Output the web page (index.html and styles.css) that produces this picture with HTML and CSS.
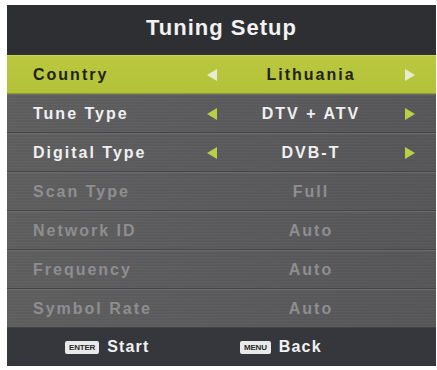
FILE: index.html
```html
<!DOCTYPE html>
<html>
<head>
<meta charset="utf-8">
<link rel="stylesheet" href="styles.css">
</head>
<body>
<div class="panel">
  <div class="header">Tuning Setup</div>
  <div class="row active">
    <span class="label">Country</span>
    <span class="arrow left"></span>
    <span class="value">Lithuania</span>
    <span class="arrow right"></span>
  </div>
  <div class="row">
    <span class="label">Tune Type</span>
    <span class="arrow left"></span>
    <span class="value">DTV + ATV</span>
    <span class="arrow right"></span>
  </div>
  <div class="row">
    <span class="label">Digital Type</span>
    <span class="arrow left"></span>
    <span class="value">DVB-T</span>
    <span class="arrow right"></span>
  </div>
  <div class="row dim">
    <span class="label">Scan Type</span>
    <span></span>
    <span class="value">Full</span>
    <span></span>
  </div>
  <div class="row dim">
    <span class="label">Network ID</span>
    <span></span>
    <span class="value">Auto</span>
    <span></span>
  </div>
  <div class="row dim">
    <span class="label">Frequency</span>
    <span></span>
    <span class="value">Auto</span>
    <span></span>
  </div>
  <div class="row dim">
    <span class="label">Symbol Rate</span>
    <span></span>
    <span class="value">Auto</span>
    <span></span>
  </div>
  <div class="footer">
    <div class="hint"><span class="key">ENTER</span><span class="hint-text">Start</span></div>
    <div class="hint"><span class="key">MENU</span><span class="hint-text">Back</span></div>
  </div>
</div>
</body>
</html>
```
FILE: styles.css
```css
html, body {
  margin: 0;
  padding: 0;
  background: #ffffff;
}
body {
  font-family: "Liberation Sans", Arial, sans-serif;
  font-weight: bold;
}
.panel {
  margin: 5px 1px 0 7px;
  width: 429px;
  display: flex;
  flex-direction: column;
}
.header {
  height: 50px;
  background: #2e2f33;
  color: #f2f2f2;
  font-size: 22px;
  letter-spacing: 1px;
  display: flex;
  align-items: center;
  justify-content: center;
  padding-bottom: 4px;
  box-sizing: border-box;
}
.row {
  height: 39px;
  box-sizing: border-box;
  display: grid;
  grid-template-columns: 173px 12px 186px 12px;
  padding-left: 26px;
  align-items: center;
  background:
    repeating-linear-gradient(180deg, rgba(255,255,255,0.025) 0px, rgba(255,255,255,0.025) 1px, rgba(0,0,0,0.03) 2px, rgba(0,0,0,0) 3px),
    linear-gradient(90deg, #5e5e5f 0%, #5a5a5c 50%, #565658 100%);
  border-top: 1px solid #6c6c6d;
  border-bottom: 1px solid #434345;
  color: #f0f0f0;
  font-size: 16px;
  letter-spacing: 2px;
}
.row.active {
  background: linear-gradient(180deg, #bac83f 0%, #b4c23a 100%);
  border-top: 1px solid #c6d25a;
  border-bottom: 1px solid #8e9a2e;
  color: #1e220f;
}
.row.dim {
  color: #8e8e8f;
}
.label {
  white-space: nowrap;
}
.value {
  text-align: center;
  white-space: nowrap;
}
.arrow {
  width: 0;
  height: 0;
  border-top: 6px solid transparent;
  border-bottom: 6px solid transparent;
  justify-self: center;
}
.arrow.left {
  border-right: 10px solid #b9cf45;
}
.arrow.right {
  border-left: 10px solid #b9cf45;
}
.active .arrow.left {
  border-right-color: #e6ecd0;
}
.active .arrow.right {
  border-left-color: #e6ecd0;
}
.footer {
  height: 38px;
  background: #36373c;
  display: grid;
  grid-template-columns: 233px 196px;
  align-items: center;
  color: #f2f2f2;
}
.hint {
  display: flex;
  align-items: center;
  gap: 8px;
}
.hint:first-child {
  padding-left: 58px;
}
.key {
  background: #e9e9e9;
  color: #2a2a2a;
  font-size: 8px;
  letter-spacing: -0.2px;
  border-radius: 2px;
  height: 13px;
  padding: 0 4px;
  display: flex;
  align-items: center;
}
.hint-text {
  font-size: 16px;
  letter-spacing: 1.2px;
}
```
